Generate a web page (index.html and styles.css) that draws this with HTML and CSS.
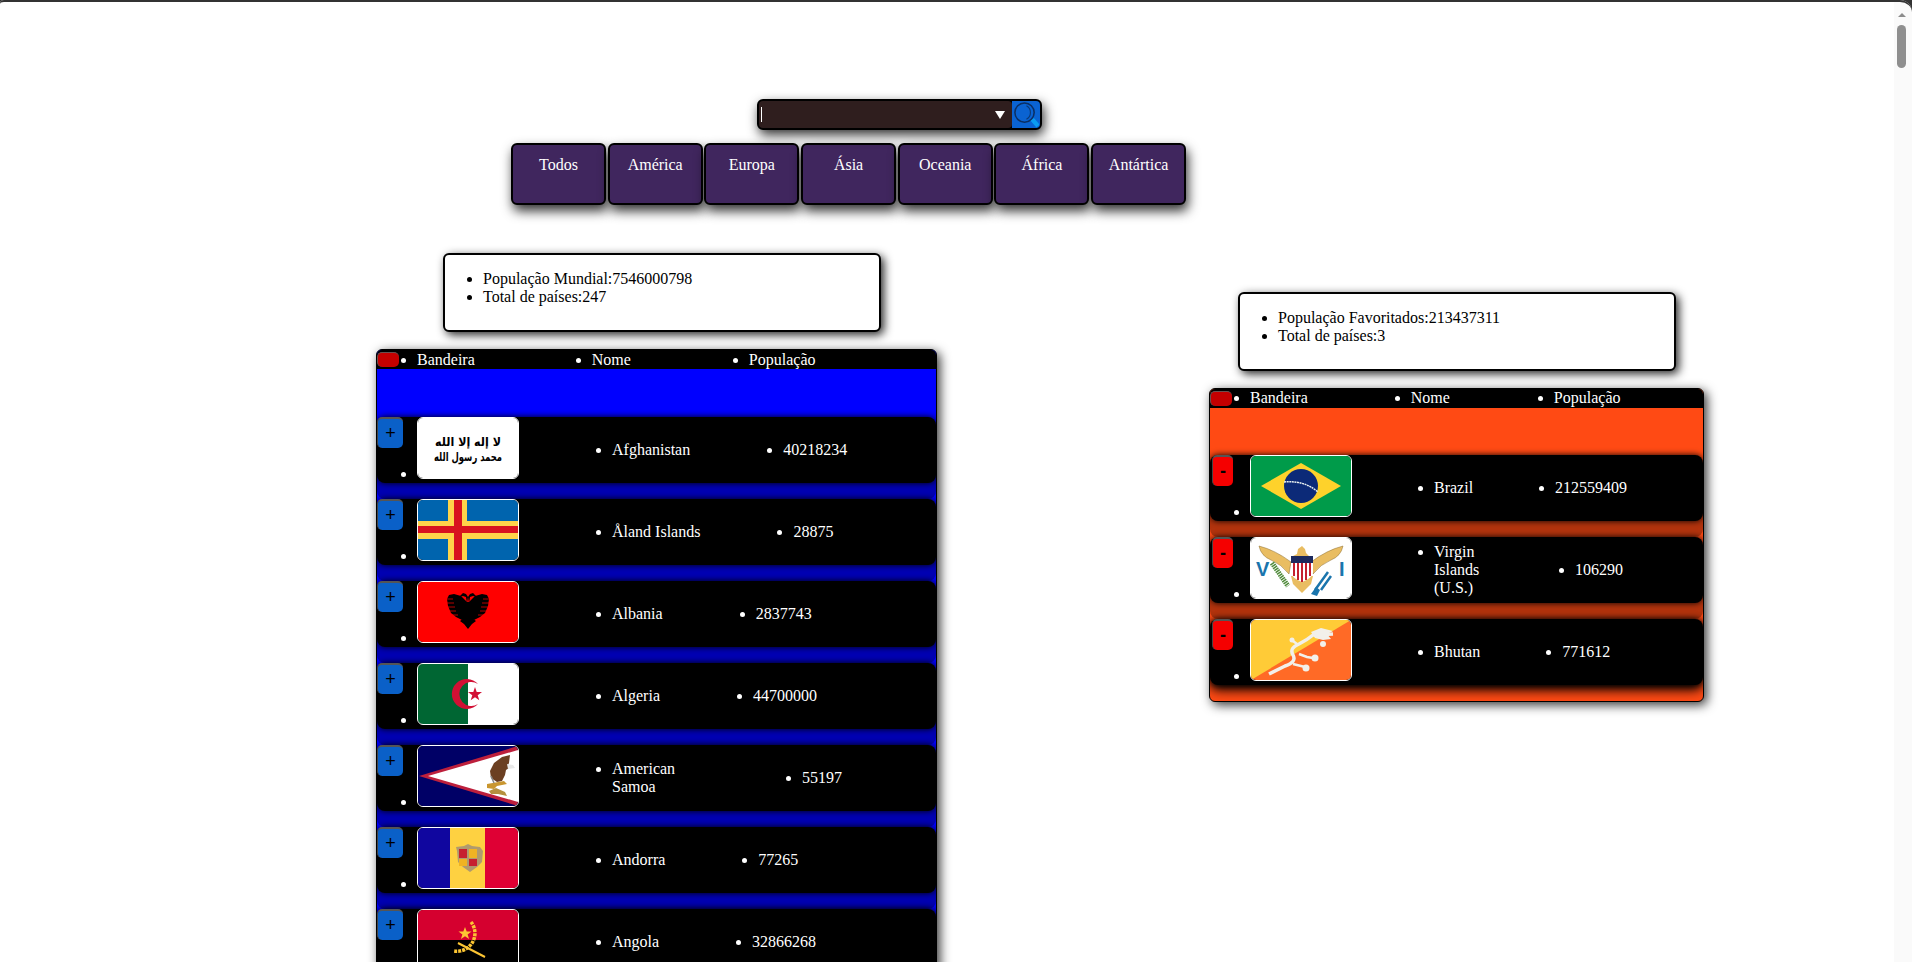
FILE: index.html
```html
<!DOCTYPE html>
<html lang="pt">
<head>
  <meta charset="UTF-8" />
  <meta name="viewport" content="width=device-width, initial-scale=1.0"/>
  <title>Países</title>
  <link rel="stylesheet" href="styles.css">
</head>
<body>
  <div class="search-box">
    <div class="search-input">
      <span class="caret"></span>
      <span class="arrow"></span>
    </div>
    <button class="search-btn">
      <svg viewBox="0 0 28 28" width="28" height="28">
        <circle cx="13" cy="12" r="10" fill="#0a63d2" stroke="#0b2f63" stroke-width="1.6"/>
        <path d="M15 5 A8 8 0 0 1 15 19" fill="none" stroke="#0b3a78" stroke-width="1.2"/>
        <path d="M21 19 L27 26" stroke="#0a9cf0" stroke-width="4.5"/>
      </svg>
    </button>
  </div>

  <nav class="menu">
    <a class="menu-item">Todos</a>
    <a class="menu-item">América</a>
    <a class="menu-item">Europa</a>
    <a class="menu-item">Ásia</a>
    <a class="menu-item">Oceania</a>
    <a class="menu-item">África</a>
    <a class="menu-item">Antártica</a>
  </nav>

  <div class="columns">
    <section class="col-all">
      <div class="stats">
        <ul>
          <li>População Mundial:7546000798</li>
          <li>Total de países:247</li>
        </ul>
      </div>
      <div class="table table-all">
        <ul class="table-head">
          <button class="btn-head"></button>
          <li>Bandeira</li>
          <li>Nome</li>
          <li>População</li>
        </ul>
        <div class="table-body">
          <ul class="row">
            <button class="btn btn-add">+</button>
            <li>
              <svg class="flag" viewBox="0 0 100 60" preserveAspectRatio="none">
                <rect width="100" height="60" fill="#fff"/>
                <text class="shahada" x="50" y="28" font-size="12" text-anchor="middle" textLength="66" lengthAdjust="spacingAndGlyphs">لا إله إلا الله</text>
                <text class="shahada" x="50" y="43" font-size="12" text-anchor="middle" textLength="68" lengthAdjust="spacingAndGlyphs">محمد رسول الله</text>
              </svg>
            </li>
            <li>Afghanistan</li>
            <li>40218234</li>
          </ul>
          <ul class="row">
            <button class="btn btn-add">+</button>
            <li>
              <svg class="flag" viewBox="0 0 100 60" preserveAspectRatio="none">
                <rect width="100" height="60" fill="#0064ae"/>
                <path d="M30 0h19v21h51v18H49v21H30V39H0V21h30z" fill="#ffd34a"/>
                <path d="M36 0h8v26h56v7H44v27h-8V33H0v-7h36z" fill="#d8121f"/>
              </svg>
            </li>
            <li>Åland Islands</li>
            <li>28875</li>
          </ul>
          <ul class="row">
            <button class="btn btn-add">+</button>
            <li>
              <svg class="flag" viewBox="0 0 100 60" preserveAspectRatio="none">
                <rect width="100" height="60" fill="#f00"/>
                <g id="eagle-half">
                  <path d="M49 20L43 14L36 12L31 13L29 17L30 24L33 31L38 35L44 38L49 36z" fill="#000"/>
                  <path d="M28 17h7M28 21h8M28 25h9M30 29h8M33 33h7" stroke="#f00" stroke-width=".7"/>
                  <path d="M49 21L48 15L45 14L41 15L45 11L48 12L50 15z" fill="#000"/>
                </g>
                <use href="#eagle-half" transform="translate(100) scale(-1 1)"/>
                <path d="M46 20h8v16l4 3-4 3-4 5-4-5-4-3 4-3z" fill="#000"/>
              </svg>
            </li>
            <li>Albania</li>
            <li>2837743</li>
          </ul>
          <ul class="row">
            <button class="btn btn-add">+</button>
            <li>
              <svg class="flag" viewBox="0 0 100 60" preserveAspectRatio="none">
                <rect width="100" height="60" fill="#fff"/>
                <rect width="50" height="60" fill="#006633"/>
                <path d="M60 20A15 15 0 1 0 60 40A12 12 0 1 1 60 20z" fill="#d21034"/>
                <path d="M57 23l1.700 5 5.300 0-4.300 3.200 1.600 5.100-4.300-3.100-4.300 3.100 1.600-5.100-4.300-3.200 5.300 0z" fill="#d21034"/>
              </svg>
            </li>
            <li>Algeria</li>
            <li>44700000</li>
          </ul>
          <ul class="row">
            <button class="btn btn-add">+</button>
            <li>
              <svg class="flag" viewBox="0 0 100 60" preserveAspectRatio="none">
                <rect width="100" height="60" fill="#000066"/>
                <path d="M100 0L1 30l99 30z" fill="#bd1f3c"/>
                <path d="M100 4L10 30l90 26z" fill="#fff"/>
                <path d="M92 9l-8 2-8 6-4 8 1 7 6 4 5-1 3-6 1-5 3-2-1-3 1-2z" fill="#6b3f22"/>
                <path d="M89 18l6 1 2 3-7 1z" fill="#e8e8e8"/>
                <path d="M69 38l17-3 3 3-10 2-3 3-7-1z" fill="#c9962f"/>
                <path d="M71 45l7-3 9 4 2 4-9-2-7 0z" fill="#b5903e"/>
                <path d="M73 30l3 7" stroke="#888" stroke-width="1.500"/>
              </svg>
            </li>
            <li>American Samoa</li>
            <li>55197</li>
          </ul>
          <ul class="row">
            <button class="btn btn-add">+</button>
            <li>
              <svg class="flag" viewBox="0 0 100 60" preserveAspectRatio="none">
                <rect width="33" height="60" fill="#10069f"/>
                <rect x="32" width="36" height="60" fill="#fed141"/>
                <rect x="67" width="33" height="60" fill="#df0034"/>
                <path d="M38 19l8-1 4-2 4 2 8 1 3 4-1 11-5 5-7 5-7-5-5-5-1-11z" fill="#b09a6e"/>
                <rect x="41" y="21" width="8" height="9" fill="#c7202f"/>
                <rect x="51" y="21" width="8" height="9" fill="#f0b323"/>
                <rect x="41" y="31" width="8" height="7" fill="#f0b323"/>
                <rect x="51" y="31" width="8" height="7" fill="#c7202f"/>
              </svg>
            </li>
            <li>Andorra</li>
            <li>77265</li>
          </ul>
          <ul class="row">
            <button class="btn btn-add">+</button>
            <li>
              <svg class="flag" viewBox="0 0 100 60" preserveAspectRatio="none">
                <rect width="100" height="30" fill="#d5002f"/>
                <rect y="30" width="100" height="30" fill="#000"/>
                <path d="M53 12A18 18 0 0 1 36 41" fill="none" stroke="#fcc533" stroke-width="3.500" stroke-dasharray="3 1"/>
                <path d="M40 33L67 47" stroke="#fcc533" stroke-width="2"/>
                <path d="M47 17l1.700 4.500 4.800 0-3.900 2.900 1.500 4.600-4.100-2.800-4.100 2.800 1.500-4.600-3.900-2.900 4.800 0z" fill="#fcc533"/>
              </svg>
            </li>
            <li>Angola</li>
            <li>32866268</li>
          </ul>
        </div>
      </div>
    </section>

    <section class="col-fav">
      <div class="stats">
        <ul>
          <li>População Favoritados:213437311</li>
          <li>Total de países:3</li>
        </ul>
      </div>
      <div class="table table-fav">
        <ul class="table-head">
          <button class="btn-head"></button>
          <li>Bandeira</li>
          <li>Nome</li>
          <li>População</li>
        </ul>
        <div class="table-body">
          <ul class="row">
            <button class="btn btn-remove">-</button>
            <li>
              <svg class="flag" viewBox="0 0 100 60" preserveAspectRatio="none">
                <rect width="100" height="60" fill="#009b4a"/>
                <path d="M50 7l40 23-40 23-40-23z" fill="#fed22b"/>
                <circle cx="50" cy="30" r="17" fill="#0c2a78"/>
                <path d="M33 26q20-2 34 10" fill="none" stroke="#e8f0f0" stroke-width="1.500" stroke-dasharray="2 .6"/>
              </svg>
            </li>
            <li>Brazil</li>
            <li>212559409</li>
          </ul>
          <ul class="row">
            <button class="btn btn-remove">-</button>
            <li>
              <svg class="flag" viewBox="0 0 100 60" preserveAspectRatio="none">
                <rect width="100" height="60" fill="#fff"/>
                <path d="M40 24Q24 12 8 8Q10 18 20 22Q30 26 38 36z" fill="#e9bd62" stroke="#8a6d2e" stroke-width=".5"/>
                <path d="M60 24Q76 12 92 8Q90 18 80 22Q70 26 62 36z" fill="#e9bd62" stroke="#8a6d2e" stroke-width=".5"/>
                <path d="M42 18l4-2 1-5 4-3 3 3 1 4 3 3z" fill="#e9bd62"/>
                <path d="M40 38h22l-2 8-9 9-9-9z" fill="#e9bd62"/>
                <rect x="40" y="18" width="22" height="7" fill="#1c2a5e"/>
                <path d="M40 25h22v10q-2 6-11 9q-9-3-11-9z" fill="#fff"/>
                <path d="M43 25v13M47 25v17M51 25v19M55 25v17M59 25v13" stroke="#c4202f" stroke-width="2"/>
                <path d="M21 25l16 23" stroke="#4f8a3a" stroke-width="5" stroke-dasharray="1.500 .8"/>
                <path d="M64 52l13-18M70 52l10-14" stroke="#1a75ad" stroke-width="2.500"/>
                <path d="M60 56l5-7 4 3-3 6z" fill="#1a75ad"/>
                <text class="flag-letter" x="5" y="38">V</text>
                <text class="flag-letter" x="88" y="38">I</text>
              </svg>
            </li>
            <li>Virgin Islands (U.S.)</li>
            <li>106290</li>
          </ul>
          <ul class="row">
            <button class="btn btn-remove">-</button>
            <li>
              <svg class="flag" viewBox="0 0 100 60" preserveAspectRatio="none">
                <rect width="100" height="60" fill="#ff6a26"/>
                <path d="M0 60L100 0H0z" fill="#ffcb37"/>
                <path d="M18 54L34 46Q46 42 42 35Q38 28 48 24Q56 20 62 15L82 14" fill="none" stroke="#f2f0ea" stroke-width="3.500"/>
                <path d="M60 12l10-4 12 3-6 3 4 5-8 1-8-2z" fill="#f2f0ea"/>
                <path d="M48 34l8 3 6 1M42 44l12 3M46 24l-4-3" fill="none" stroke="#f2f0ea" stroke-width="2.500"/>
                <circle cx="64" cy="38" r="3.500" fill="#f2f0ea"/>
                <circle cx="72" cy="24" r="3" fill="#f2f0ea"/>
                <circle cx="55" cy="48" r="3.500" fill="#f2f0ea"/>
                <circle cx="41" cy="20" r="2.500" fill="#f2f0ea"/>
              </svg>
            </li>
            <li>Bhutan</li>
            <li>771612</li>
          </ul>
        </div>
      </div>
    </section>
  </div>

  <div class="scrollbar">
    <span class="scroll-up"></span>
    <span class="scroll-thumb"></span>
  </div>
  <div class="window-edge"></div>
</body>
</html>
```

FILE: styles.css
```css
html, body {
  height: 962px;
  overflow: hidden;
}
body {
  font-family: "Liberation Serif", "Times New Roman", serif;
  font-size: 16px;
  background: #ffffff;
  color: #000;
  margin: 0;
  position: relative;
}

/* search */
.search-box {
  display: flex;
  width: 285px;
  height: 31px;
  box-sizing: border-box;
  margin: 0 0 0 757px;
  position: relative;
  top: 99px;
  border: 2px solid #000;
  border-radius: 6px;
  background: #000;
  box-shadow: 2px 5px 12px rgba(0, 0, 0, 0.8);
}
.search-input {
  flex: 1;
  display: flex;
  align-items: center;
  justify-content: space-between;
  padding: 0 7px 0 2px;
  background: #2f1e1e;
  border-radius: 4px;
}
.caret {
  width: 1px;
  height: 15px;
  background: #fff;
}
.arrow {
  border-left: 5px solid transparent;
  border-right: 5px solid transparent;
  border-top: 8px solid #fff;
}
.search-btn {
  width: 28px;
  padding: 0;
  border: none;
  border-radius: 0 4px 4px 0;
  background: #0a63d2;
  overflow: hidden;
}
.search-btn svg {
  display: block;
  width: 27px;
  height: 27px;
}

/* continents */
.menu {
  display: flex;
  gap: 1.7px;
  margin: 112px 0 0 511px;
}
.menu-item {
  width: 95px;
  height: 62px;
  box-sizing: border-box;
  padding-top: 11px;
  text-align: center;
  color: #fff;
  background: #40265e;
  border: 2px solid #000;
  border-radius: 6px;
  box-shadow: 2px 6px 12px rgba(0, 0, 0, 0.8);
}

.columns {
  display: flex;
  align-items: flex-start;
  margin-top: 48px;
}
.col-all {
  width: 561px;
  margin-left: 376px;
}
.col-fav {
  width: 495px;
  margin: 39px 0 0 272px;
}

.stats {
  width: 438px;
  height: 79px;
  box-sizing: border-box;
  background: #fff;
  border: 2px solid #000;
  border-radius: 6px;
  box-shadow: 3px 3px 10px rgba(0, 0, 0, 0.85);
}
.stats ul {
  margin: 15px 0;
  padding-left: 38px;
}
.col-all .stats {
  margin-left: 67px;
}
.col-fav .stats {
  margin-left: 29px;
}

/* tables */
.table {
  position: relative;
  margin-top: 17px;
  overflow: hidden;
  border: 1px solid #000;
  border-radius: 6px;
  color: #fff;
  box-shadow: 3px 3px 11px rgba(0, 0, 0, 0.8);
}
.table-all {
  background: #0000ff;
}
.table-fav {
  background: #ff4a14;
}
.table-head {
  position: relative;
  display: flex;
  margin: 0;
  padding: 1px 0 0 40px;
  height: 18.4px;
  background: #000;
}
.table-all .table-head li:nth-of-type(2) {
  margin-left: 117px;
}
.table-all .table-head li:nth-of-type(3) {
  margin-left: 118px;
}
.table-fav .table-head {
  padding-top: 0;
  height: 19.4px;
}
.table-fav .table-head li:nth-of-type(2) {
  margin-left: 103px;
}
.table-fav .table-head li:nth-of-type(3) {
  margin-left: 104px;
}
.btn-head {
  position: absolute;
  top: 2px;
  left: 0;
  width: 22px;
  height: 15px;
  padding: 0;
  background: #c40000;
  border: none;
  border-top: 1px solid #6a5050;
  border-left: 1px solid #6a5050;
  border-radius: 5px;
}
.table-body {
  padding: 48px 0 16px;
}
.table-fav .table-body {
  padding-top: 47px;
}
.row {
  position: relative;
  display: flex;
  align-items: center;
  margin: 0 0 16px;
  padding: 0 0 0 40px;
  min-height: 66px;
  background: #000;
  border-radius: 8px;
  box-shadow: 0 0 6px #000, 0 16px 0 rgba(0, 0, 0, 0.3);
}
.row:last-child {
  margin-bottom: 0;
  box-shadow: 0 0 6px #000, 0 5px 12px #000;
}
.table-all .row {
  gap: 93px;
}
.table-fav .row {
  gap: 82px;
}
.table-all .row li:nth-of-type(2) {
  max-width: 97px;
}
.table-fav .row li:nth-of-type(2) {
  max-width: 59px;
}
.btn {
  position: absolute;
  top: 0;
  left: 0;
  height: 31px;
  padding: 0;
  font-family: "Liberation Sans", Arial, sans-serif;
  font-size: 18px;
  color: #000;
  border: none;
  border-top: 2px solid #555;
  border-left: 1px solid #444;
  border-radius: 5px;
}
.btn-add {
  width: 26px;
  background: #0a60c8;
}
.btn-remove {
  left: 2px;
  width: 21px;
  background: #f50000;
  font-weight: bold;
}
.flag {
  display: inline-block;
  width: 102px;
  height: 62px;
  box-sizing: border-box;
  border: 1px solid #fff;
  border-radius: 6px;
}
.shahada {
  font-family: "DejaVu Sans", sans-serif;
  font-weight: bold;
}
.flag-letter {
  font-family: "Liberation Sans", sans-serif;
  font-size: 20px;
  font-weight: bold;
  fill: #1a75ad;
}

/* browser chrome around the page */
.scrollbar {
  position: absolute;
  top: 0;
  right: 0;
  width: 18px;
  height: 962px;
  background: #fafafa;
}
.scroll-up {
  position: absolute;
  top: 13px;
  left: 4px;
  border-left: 4.5px solid transparent;
  border-right: 4.5px solid transparent;
  border-bottom: 4.5px solid #8c8c8c;
}
.scroll-thumb {
  position: absolute;
  top: 25px;
  left: 3px;
  width: 9px;
  height: 43px;
  background: #8f8f8f;
  border-radius: 5px;
}
.window-edge {
  position: absolute;
  inset: 0;
  overflow: hidden;
  border-top: 2px solid #333;
  border-radius: 4px 12px 0 0;
  box-shadow: 0 0 0 12px #333;
  clip-path: inset(0);
  pointer-events: none;
}
```
